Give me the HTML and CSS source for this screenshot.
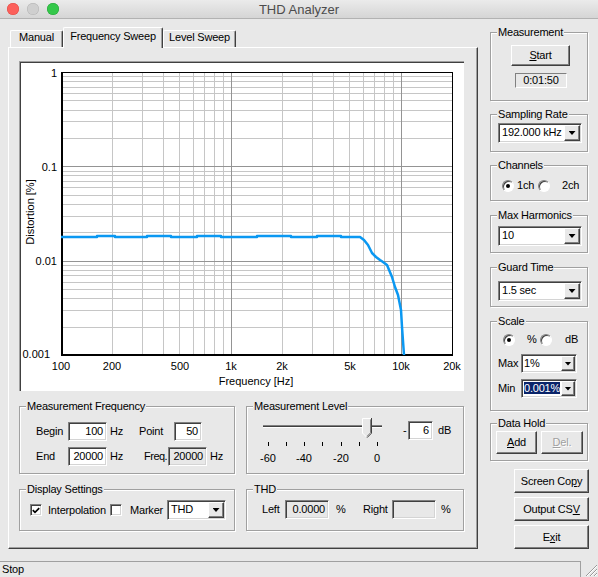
FILE: index.html
```html
<!DOCTYPE html>
<html lang="en">
<head>
    <meta charset="UTF-8">
    <title>THD Analyzer</title>
    <link rel="stylesheet" href="styles.css">
</head>
<body>
    <div class="titlebar">
        <div class="lights"><span class="light red"></span><span class="light idle"></span><span class="light green"></span></div>
        <div class="title">THD Analyzer</div>
    </div>

    <div class="client">
        <div class="tabctl">
            <div class="tabstrip">
                <div class="tab t-manual">Manual</div>
                <div class="tab t-freq active">Frequency Sweep</div>
                <div class="tab t-level">Level Sweep</div>
            </div>
            <div class="page">
                <div class="chart">
                    <svg width="445" height="330" viewBox="0 0 445 330">
                        <path class="grid-minor" d="M93.5 11V294M123.5 11V294M144.5 11V294M160.5 11V294M174.5 11V294M185.5 11V294M195.5 11V294M204.5 11V294M263.5 11V294M293.5 11V294M314.5 11V294M330.5 11V294M344.5 11V294M355.5 11V294M365.5 11V294M374.5 11V294"/>
                        <path class="grid-minor" d="M42 15.5H433M42 20.5H433M42 26.5H433M42 32.5H433M42 39.5H433M42 49.5H433M42 60.5H433M42 77.5H433M42 110.5H433M42 114.5H433M42 120.5H433M42 126.5H433M42 134.5H433M42 143.5H433M42 155.5H433M42 171.5H433M42 204.5H433M42 209.5H433M42 214.5H433M42 221.5H433M42 228.5H433M42 237.5H433M42 249.5H433M42 266.5H433"/>
                        <path class="grid-major" d="M212.5 11V294M382.5 11V294M42 105.5H433M42 200.5H433"/>
                        <rect class="frame" x="42.5" y="11.5" width="391" height="283"/>
                        <path class="frame" d="M43.5 11V294M42 293.5H433"/>
                        <polyline class="curve" points="42,176 78,176 78,175 96,175 96,176 128,176 128,175 152,175 152,176 178,176 178,175 202,175 202,176 238,176 238,175 272,175 272,176 298,176 298,175 322,175 322,176 341,176 345,179 349,184 353,192 357,196 361,199 364,201 368,204 373,216 376,226 379,234 382,249 383,266 384,280 385,294"/>
                        <g class="axis-label">
                            <text x="38" y="16" text-anchor="end">1</text>
                            <text x="38" y="110" text-anchor="end">0.1</text>
                            <text x="38" y="204" text-anchor="end">0.01</text>
                            <text x="31" y="297" text-anchor="end">0.001</text>
                            <text x="42" y="309" text-anchor="middle">100</text>
                            <text x="93" y="309" text-anchor="middle">200</text>
                            <text x="161" y="309" text-anchor="middle">500</text>
                            <text x="212" y="309" text-anchor="middle">1k</text>
                            <text x="263" y="309" text-anchor="middle">2k</text>
                            <text x="331" y="309" text-anchor="middle">5k</text>
                            <text x="382" y="309" text-anchor="middle">10k</text>
                            <text x="433" y="309" text-anchor="middle">20k</text>
                            <text x="237" y="324" text-anchor="middle">Frequency [Hz]</text>
                            <text transform="translate(15 151) rotate(-90)" text-anchor="middle">Distortion [%]</text>
                        </g>
                    </svg>
                </div>

                <div class="row">
                    <div class="group g-freq">
                        <div class="legend">Measurement Frequency</div>
                        <div class="fields">
                            <div class="frow">
                                <span class="w32">Begin</span>
                                <span class="edit w39">100</span>
                                <span class="unit w32">Hz</span>
                                <span class="w35">Point</span>
                                <span class="edit w28">50</span>
                            </div>
                            <div class="frow">
                                <span class="w32">End</span>
                                <span class="edit w39">20000</span>
                                <span class="unit w37">Hz</span>
                                <span class="lbl-freq">Freq.</span>
                                <span class="edit ro w39">20000</span>
                                <span class="unit">Hz</span>
                            </div>
                        </div>
                    </div>
                    <div class="group g-level">
                        <div class="legend">Measurement Level</div>
                        <div class="level">
                            <svg class="slider" width="135" height="52" viewBox="0 0 135 52">
                                <path d="M5 11.5H124" stroke="#808080"/>
                                <path d="M5 12.5H124" stroke="#404040"/>
                                <path d="M5 13.5H124" stroke="#fff"/>
                                <path d="M104.5 4.5H113.5V19L109 23.5L104.5 19Z" fill="#e8e8e8"/>
                                <path d="M104.5 19.5V4.5H113" stroke="#fff" fill="none"/>
                                <path d="M104.5 19L109 23.5" stroke="#fff" fill="none"/>
                                <path d="M113.5 4V19.2L109 23.7" stroke="#404040" fill="none"/>
                                <path d="M112.5 5.5V18.8L109 22.3" stroke="#808080" fill="none"/>
                                <path d="M10.5 28V32M28.5 28V32M46.5 28V32M64.5 28V32M83.5 28V32M101.5 28V32M119.5 28V32" stroke="#000"/>
                                <g class="axis-label">
                                    <text x="10" y="48" text-anchor="middle">-60</text>
                                    <text x="46" y="48" text-anchor="middle">-40</text>
                                    <text x="83" y="48" text-anchor="middle">-20</text>
                                    <text x="119" y="48" text-anchor="middle">0</text>
                                </g>
                            </svg>
                            <div class="level-value">
                                <span class="minus">-</span>
                                <span class="edit w25">6</span>
                                <span class="unit-db">dB</span>
                            </div>
                        </div>
                    </div>
                </div>

                <div class="row">
                    <div class="group g-disp">
                        <div class="legend">Display Settings</div>
                        <div class="disp">
                            <span class="check"><svg width="8" height="7" viewBox="0 0 8 7"><path d="M0.8 3.2L3 5.4L7.2 1.2" stroke="#000" stroke-width="1.7" fill="none"/></svg></span>
                            <span class="cl-interp">Interpolation</span>
                            <span class="check"></span>
                            <span class="cl-marker">Marker</span>
                            <div class="combo w59"><span class="ctext">THD</span><span class="drop"></span></div>
                        </div>
                    </div>
                    <div class="group g-thd">
                        <div class="legend">THD</div>
                        <div class="thd">
                            <span class="w23">Left</span>
                            <span class="edit ro w44">0.0000</span>
                            <span class="pct">%</span>
                            <span class="w29">Right</span>
                            <span class="edit ro w44"></span>
                            <span class="unit-pct">%</span>
                        </div>
                    </div>
                </div>
            </div>
        </div>

        <div class="side">
            <div class="group g-meas">
                <div class="legend">Measurement</div>
                <div class="btn b-start"><span><u>S</u>tart</span></div>
                <div class="static b-time">0:01:50</div>
            </div>
            <div class="group g-rate">
                <div class="legend">Sampling Rate</div>
                <div class="combo c-side"><span class="ctext">192.000 kHz</span><span class="drop"></span></div>
            </div>
            <div class="group g-ch">
                <div class="legend">Channels</div>
                <div class="radios r-ch">
                    <span class="radio on"></span><span class="rl-1ch">1ch</span>
                    <span class="radio"></span><span class="rl-2ch">2ch</span>
                </div>
            </div>
            <div class="group g-harm">
                <div class="legend">Max Harmonics</div>
                <div class="combo c-side"><span class="ctext">10</span><span class="drop"></span></div>
            </div>
            <div class="group g-guard">
                <div class="legend">Guard Time</div>
                <div class="combo c-side"><span class="ctext">1.5 sec</span><span class="drop"></span></div>
            </div>
            <div class="group g-scale">
                <div class="legend">Scale</div>
                <div class="radios r-scale">
                    <span class="radio on"></span><span class="rl-pct">%</span>
                    <span class="radio"></span><span class="rl-db">dB</span>
                </div>
                <div class="srow s-max">
                    <span class="slabel">Max</span>
                    <div class="combo c-scale"><span class="ctext">1%</span><span class="drop"></span></div>
                </div>
                <div class="srow s-min">
                    <span class="slabel">Min</span>
                    <div class="combo c-scale"><span class="ctext"><span class="sel">0.001%</span></span><span class="drop"></span></div>
                </div>
            </div>
            <div class="group g-hold">
                <div class="legend">Data Hold</div>
                <div class="hold-btns">
                    <div class="btn b-add"><span><u>A</u>dd</span></div>
                    <div class="btn b-del disabled"><span><u>D</u>el.</span></div>
                </div>
            </div>
            <div class="cmds">
                <div class="btn b-wide"><span>Screen Co<u>p</u>y</span></div>
                <div class="btn b-wide"><span>Output CS<u>V</u></span></div>
                <div class="btn b-wide"><span>E<u>x</u>it</span></div>
            </div>
        </div>
    </div>

    <div class="statusbar">
        <div class="status-field">Stop</div>
        <svg class="grip" width="17" height="16" viewBox="0 0 17 16">
            <path d="M16 4L5 15M16 8L9 15M16 12L13 15" stroke="#9a9a9a"/>
            <path d="M16 5L6 15M16 9L10 15M16 13L14 15" stroke="#fff"/>
        </svg>
    </div>
</body>
</html>
```

FILE: styles.css
```css
* {
    box-sizing: border-box;
}
html, body {
    margin: 0;
}
body {
    width: 598px;
    height: 577px;
    overflow: hidden;
    background: #e8e8e8;
    font-family: "Liberation Sans", Arial, sans-serif;
    font-size: 11px;
    line-height: 13px;
    letter-spacing: -0.2px;
    color: #000;
}

/* mac window chrome */
.titlebar {
    height: 19px;
    display: grid;
    grid-template-columns: 1fr auto 1fr;
    align-items: center;
    background: linear-gradient(#ebebeb, #d5d5d5);
    border-bottom: 1px solid #b2b2b2;
}
.lights {
    display: flex;
    gap: 8px;
    padding-left: 7px;
}
.light {
    width: 12px;
    height: 12px;
    border-radius: 50%;
}
.red { background: #fc605b; box-shadow: inset 0 0 0 0.5px #de4b44; }
.idle { background: #cfcfcf; box-shadow: inset 0 0 0 0.5px #b3b3b3; }
.green { background: #34c84a; box-shadow: inset 0 0 0 0.5px #27a23a; }
.title {
    font-size: 13px;
    letter-spacing: 0;
    color: #4c4c4c;
}

.client {
    display: flex;
    height: 542px;
}

/* tab control */
.tabctl {
    width: 470px;
    margin: 8px 0 0 8px;
}
.tabstrip {
    display: flex;
    align-items: flex-end;
    height: 20px;
    padding-left: 2px;
    position: relative;
    z-index: 1;
}
.tab {
    height: 17px;
    text-align: center;
    border: 1px solid #fff;
    border-right-color: #404040;
    border-bottom: 0;
    border-radius: 2px 2px 0 0;
    box-shadow: inset -1px 0 0 #a0a0a0;
}
.tab.active {
    height: 21px;
    margin-bottom: -1px;
    padding-top: 2px;
    background: #e8e8e8;
}
.t-manual { width: 53px; }
.t-freq { width: 100px; }
.t-level { width: 73px; }

.page {
    height: 502px;
    padding: 13px 0 0 10px;
    border: 1px solid;
    border-color: #fff #404040 #404040 #fff;
    box-shadow: inset -1px -1px 0 #a0a0a0;
}

/* graph */
.chart {
    width: 445px;
    height: 330px;
    background: #fff;
    box-shadow: inset 1px 1px 0 #a0a0a0, inset 2px 2px 0 #404040, inset -1px -1px 0 #fff;
}
.chart svg, .slider {
    display: block;
    font-family: "Liberation Sans", Arial, sans-serif;
    font-size: 11px;
    letter-spacing: 0;
}
.grid-minor { fill: none; stroke: #c6c6c6; }
.grid-major { fill: none; stroke: #949494; }
.frame { fill: none; stroke: #000; }
.curve {
    fill: none;
    stroke: #0a98f2;
    stroke-width: 2.5;
    stroke-linejoin: round;
}
.axis-label { fill: #000; }

/* group boxes */
.row {
    display: flex;
    gap: 11px;
    margin-top: 15px;
}
.group {
    border: 1px solid #a0a0a0;
    box-shadow: inset 1px 1px 0 #fff, 1px 1px 0 #fff;
}
.legend {
    width: max-content;
    margin: -8px 0 0 6px;
    padding: 0 1px;
    line-height: 14px;
    background: #e8e8e8;
}
.g-freq { width: 216px; height: 68px; }
.g-level { width: 218px; height: 68px; }
.g-disp { width: 216px; height: 42px; }
.g-thd { width: 218px; height: 42px; }

/* widgets */
.edit {
    flex: none;
    height: 19px;
    padding: 2px 3px 0 0;
    text-align: right;
    background: #fff;
    border: 1px solid;
    border-color: #808080 #fff #fff #808080;
    box-shadow: inset 1px 1px 0 #404040, inset -1px -1px 0 #d4d4d4;
}
.edit.ro {
    background: transparent;
}
.static {
    text-align: center;
    border: 1px solid;
    border-color: #808080 #fff #fff #808080;
}
.btn {
    display: flex;
    align-items: center;
    justify-content: center;
    background: #e8e8e8;
    border: 1px solid;
    border-color: #fff #404040 #404040 #fff;
    box-shadow: inset -1px -1px 0 #808080;
}
.btn.disabled {
    color: #a0a0a0;
    text-shadow: 1px 1px 0 #fff;
}
.combo {
    display: flex;
    flex: none;
    height: 20px;
    padding: 1px;
    background: #fff;
    border: 1px solid;
    border-color: #808080 #fff #fff #808080;
    box-shadow: inset 1px 1px 0 #404040, inset -1px -1px 0 #d4d4d4;
}
.ctext {
    flex: 1;
    min-width: 0;
    padding: 1px 0 0 2px;
    white-space: nowrap;
    overflow: hidden;
}
.drop {
    flex: none;
    width: 16px;
    display: flex;
    align-items: center;
    justify-content: center;
    background: #e8e8e8;
    border: 1px solid;
    border-color: #fff #404040 #404040 #fff;
    box-shadow: inset -1px -1px 0 #808080;
}
.drop::after {
    content: "";
    width: 7px;
    height: 4px;
    background: #000;
    clip-path: polygon(0 0, 100% 0, 50% 100%);
}
.check {
    flex: none;
    width: 12px;
    height: 12px;
    display: flex;
    align-items: center;
    justify-content: center;
    background: #fff;
    border: 1px solid;
    border-color: #808080 #fff #fff #808080;
    box-shadow: inset 1px 1px 0 #404040, inset -1px -1px 0 #d4d4d4;
}
.radio {
    flex: none;
    width: 12px;
    height: 12px;
    display: flex;
    align-items: center;
    justify-content: center;
    border-radius: 50%;
    background: #fff;
    border: 1px solid;
    border-color: #808080 #fff #fff #808080;
    box-shadow: inset 1px 1px 0 #404040;
}
.radio.on::after {
    content: "";
    width: 4px;
    height: 4px;
    border-radius: 50%;
    background: #000;
}

.w23 { width: 23px; }
.w25 { width: 25px; }
.w28 { width: 28px; }
.w29 { width: 29px; }
.w32 { width: 32px; }
.w35 { width: 35px; }
.w37 { width: 37px; }
.w39 { width: 39px; }
.w44 { width: 44px; }
.w59 { width: 59px; }

/* measurement frequency */
.fields {
    display: flex;
    flex-direction: column;
    gap: 6px;
    margin-top: 9px;
    padding-left: 16px;
}
.frow {
    display: flex;
    align-items: center;
    height: 19px;
}
.frow > span {
    flex: none;
    white-space: nowrap;
}
.unit {
    padding-left: 3px;
}
.lbl-freq {
    width: 24px;
    letter-spacing: -0.5px;
}

/* measurement level */
.level {
    display: flex;
    align-items: flex-start;
    margin-top: 1px;
    padding-left: 11px;
}
.level-value {
    display: flex;
    align-items: center;
    margin: 7px 0 0 10px;
}
.minus { width: 5px; }
.unit-db { padding-left: 5px; }

/* display settings */
.disp {
    display: flex;
    align-items: center;
    margin-top: 4px;
    padding-left: 10px;
}
.cl-interp { flex: none; width: 68px; padding-left: 6px; white-space: nowrap; }
.cl-marker { flex: none; width: 45px; padding-left: 8px; }

/* thd */
.thd {
    display: flex;
    align-items: center;
    margin-top: 4px;
    padding-left: 15px;
}
.pct { width: 34px; padding-left: 7px; }
.unit-pct { padding-left: 5px; }

/* right column */
.side {
    width: 99px;
    margin: 13px 0 0 12px;
    display: flex;
    flex-direction: column;
}
.side .group { width: 98px; }
.g-meas { height: 69px; }
.g-rate { height: 38px; margin-top: 13px; }
.g-ch { height: 36px; margin-top: 13px; }
.g-harm { height: 38px; margin-top: 14px; }
.g-guard { height: 40px; margin-top: 14px; }
.g-scale { height: 90px; margin-top: 14px; }
.g-hold { height: 38px; margin-top: 12px; }

.b-start {
    width: 59px;
    height: 21px;
    margin: 6px 0 0 20px;
}
.b-time {
    width: 52px;
    height: 15px;
    margin: 7px 0 0 24px;
}
.c-side {
    width: 84px;
    margin: 2px 0 0 7px;
}
.g-harm .c-side { margin-top: 4px; }
.g-guard .c-side { margin-top: 7px; }

.radios {
    display: flex;
    align-items: center;
    height: 13px;
}
.r-ch { margin: 7px 0 0 11px; }
.rl-1ch { width: 21px; padding-left: 3px; box-sizing: content-box; }
.rl-2ch { padding-left: 12px; }
.r-scale { margin: 5px 0 0 12px; }
.rl-pct { width: 13px; padding-left: 12px; box-sizing: content-box; }
.rl-db { padding-left: 13px; }

.srow {
    display: flex;
    align-items: center;
    margin-left: 7px;
}
.s-max { margin-top: 8px; }
.s-min { margin-top: 6px; }
.slabel { width: 23px; }
.c-scale {
    width: 56px;
    height: 19px;
}
.c-scale .ctext { padding-left: 1px; }
.c-scale .drop { width: 14px; }
.sel {
    color: #fff;
    background: #0a246a;
    outline: 1px dotted #fff;
}

.hold-btns {
    display: flex;
    gap: 4px;
    margin: 1px 0 0 5px;
}
.b-add { width: 41px; height: 23px; }
.b-del { width: 42px; height: 23px; }

.cmds {
    display: flex;
    flex-direction: column;
    align-items: flex-end;
    gap: 4px;
    margin-top: 8px;
}
.b-wide {
    width: 75px;
    height: 24px;
}

/* status bar */
.statusbar {
    display: flex;
    height: 16px;
}
.status-field {
    width: 581px;
    padding-left: 2px;
    line-height: 15px;
    border-top: 1px solid #a0a0a0;
    border-right: 1px solid #a0a0a0;
}
.grip {
    flex: none;
    display: block;
}
```
